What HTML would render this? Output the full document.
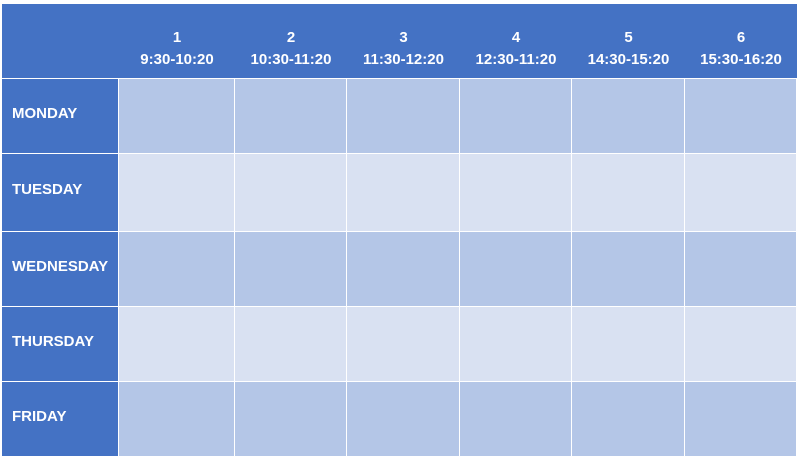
<!DOCTYPE html><html><head><style>
body{margin:0;width:797px;height:457px;background:#fff;position:relative;overflow:hidden;font-family:"Liberation Sans",sans-serif;font-weight:bold;color:#fff}
div{position:absolute;box-sizing:border-box}
.h{background:#4472c4}
.a{background:#b4c6e7}.b{background:#d9e1f2}
.t{text-align:center;font-size:15px;line-height:22px}
.d{font-size:15px;padding-left:10px;padding-bottom:6px;display:flex;align-items:center}
</style></head><body>
<div class="h" style="left:2px;top:4px;width:795px;height:74px"></div>
<script>
var xs=[2,119,235,347,460,572,685,797],ys=[4,79,154,232,307,382,457];
var days=["MONDAY","TUESDAY","WEDNESDAY","THURSDAY","FRIDAY"];
var hd=["9:30-10:20","10:30-11:20","11:30-12:20","12:30-11:20","14:30-15:20","15:30-16:20"];
var s="";
for(var c=1;c<7;c++)s+='<div class="t" style="left:'+xs[c]+'px;top:27px;width:'+(xs[c+1]-xs[c])+'px">'+c+'<br>'+hd[c-1]+'</div>';
for(var r=0;r<5;r++){var y=ys[r+1],h=ys[r+2]-y-1;
s+='<div class="h d" style="left:2px;top:'+y+'px;width:116px;height:'+h+'px">'+days[r]+'</div>';
for(var c=1;c<7;c++)s+='<div class="'+(r%2?'b':'a')+'" style="left:'+xs[c]+'px;top:'+y+'px;width:'+(xs[c+1]-xs[c]-1)+'px;height:'+h+'px"></div>';}
document.write(s);
</script>
</body></html>
